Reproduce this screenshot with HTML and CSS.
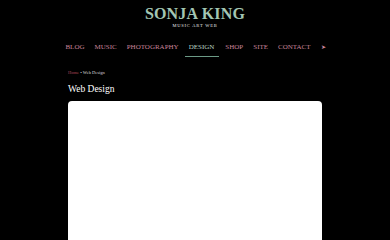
FILE: index.html
```html
<!DOCTYPE html>
<html lang="en">
    <head>
        <meta charset="utf-8">
        <meta name="viewport" content="width=device-width, initial-scale=1.0">
        <title>Web Design - Sonja King</title>
        <link rel="stylesheet" href="styles.css">
    </head>
    <body>
        <header class="masthead">
            <div class="brand">SONJA KING</div>
            <div class="tagline">MUSIC ART WEB</div>
        </header>

        <nav class="menu">
            <a href="#">BLOG</a>
            <a href="#">MUSIC</a>
            <a href="#">PHOTOGRAPHY</a>
            <a href="#" class="current">DESIGN</a>
            <a href="#">SHOP</a>
            <a href="#">SITE</a>
            <a href="#">CONTACT</a>
            <a href="#" class="more">&#10148;</a>
        </nav>

        <main class="content">
            <div class="crumbs">
                <a href="#">Home</a> &bull; Web Design
            </div>
            <h1>Web Design</h1>
            <div class="card"></div>
        </main>
    </body>
</html>
```

FILE: styles.css
```css
html, body {
    margin:0;
    background-color:#000;
}

body {
    font-family:"Liberation Serif", "Times New Roman", serif;
    color:#fff;
}

.masthead {
    text-align:center;
    padding-top:6px;
}

.brand {
    font-size:16px;
    font-weight:bold;
    color:#a3c6b3;
    line-height:16px;
    letter-spacing:0.2px;
}

.tagline {
    font-size:4.5px;
    letter-spacing:0.8px;
    color:#e8e8e8;
    line-height:6px;
    margin-top:1px;
}

.menu {
    display:flex;
    justify-content:center;
    gap:10px;
    margin-top:12px;
    padding-left:1px;
}

.menu a {
    font-size:7px;
    color:#c8849a;
    text-decoration:none;
    line-height:8px;
    padding:2px 0 5px;
    border-bottom:1px solid transparent;
}

.menu a.current {
    color:#b7d2c4;
    border-bottom-color:#6c9a86;
    padding-left:4px;
    padding-right:5px;
    margin:0 -4px 0 -4px;
}

.menu a.more {
    font-size:6px;
}

.content {
    width:254px;
    margin:13px auto 0;
}

.crumbs {
    font-size:4.5px;
    color:#ddd;
    line-height:6px;
}

.crumbs a {
    color:#b04a5c;
    text-decoration:none;
}

h1 {
    font-size:9.5px;
    font-weight:normal;
    margin:7px 0 0;
    line-height:12px;
}

.card {
    background-color:#fff;
    border-radius:4px;
    height:200px;
    margin-top:6px;
}
```
